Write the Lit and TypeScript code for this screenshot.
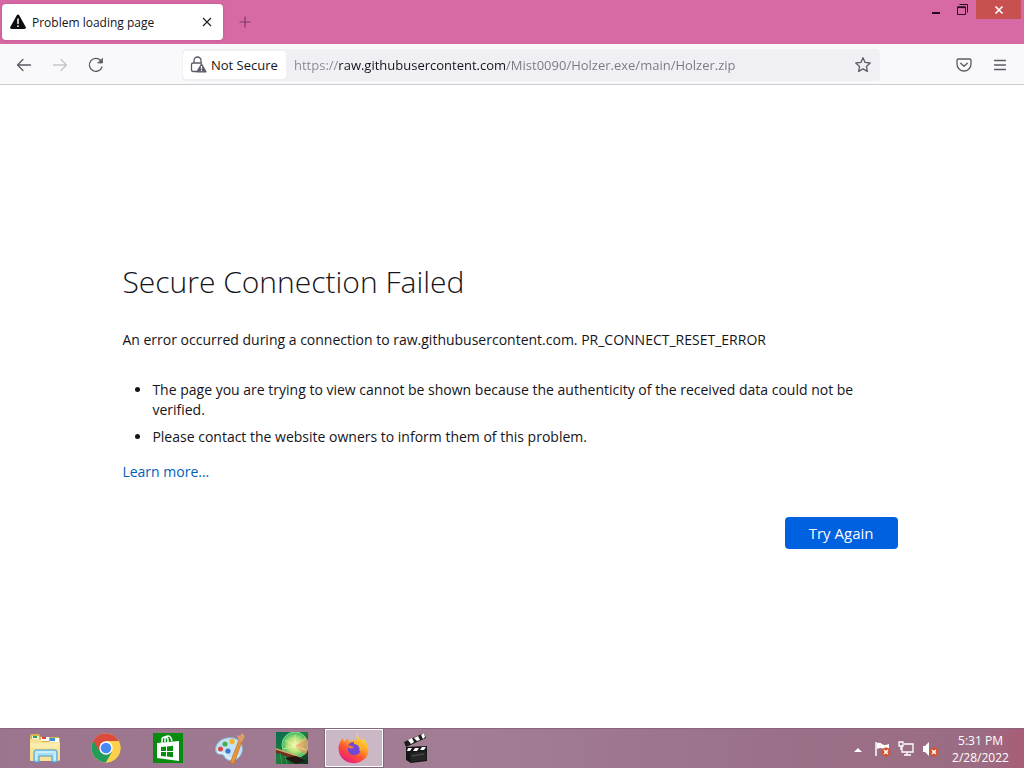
import { LitElement, html, svg, css } from "lit";
import { customElement, state } from "lit/decorators.js";

const warning = svg`<path d="M6.8 1.3a1.4 1.4 0 0 1 2.4 0l6.5 11.6a1.4 1.4 0 0 1-1.2 2.1h-13a1.4 1.4 0 0 1-1.2-2.1z" fill="#0c0c0d"/><path d="M8 5v4.6" stroke="#fff" stroke-width="1.5" stroke-linecap="round"/><circle cx="8" cy="12.2" r=".9" fill="#fff"/>`;

@customElement("browser-tabs")
class BrowserTabs extends LitElement {
  static styles = css`
    :host { display: flex; align-items: flex-start; height: 44px; background: #d769a4; font: 12px/16px "Open Sans", sans-serif; }
    button { border: 0; padding: 0; background: none; display: grid; place-items: center; }
    .tab { display: flex; align-items: center; gap: 6px; box-sizing: border-box; width: 221px; height: 36px; margin: 4px 0 0 2px; padding: 0 6px 0 8px; background: #fff; border-radius: 4px; box-shadow: 0 0 3px #80408066; color: #15141a; }
    .title { flex: 1; padding-top: 2px; }
    .close { width: 20px; height: 20px; }
    .new { width: 32px; height: 36px; margin: 4px 0 0 6px; }
    .controls { display: flex; margin-left: auto; margin-right: 3px; }
    .control { width: 26px; height: 19px; }
    .exit { width: 45px; height: 19px; background: #c75050; margin-left: 1px; }
  `;
  render() {
    return html`
      <div class="tab">
        <svg width="16" height="16" viewBox="0 0 16 16" aria-hidden="true">${warning}</svg>
        <span class="title">Problem loading page</span>
        <button class="close" aria-label="Close tab"><svg width="10" height="10" viewBox="0 0 10 10"><path d="M1 1l8 8M9 1L1 9" stroke="#222" stroke-width="1.2"/></svg></button>
      </div>
      <button class="new" aria-label="New tab"><svg width="12" height="12" viewBox="0 0 12 12"><path d="M6 .5v11M.5 6h11" stroke="#7b3c68" stroke-width="1.2"/></svg></button>
      <div class="controls">
        <button class="control" aria-label="Minimize"><svg width="10" height="12" viewBox="0 0 10 12"><path d="M1 9h8" stroke="#260d20" stroke-width="2"/></svg></button>
        <button class="control" aria-label="Restore"><svg width="11" height="11" viewBox="0 0 11 11" fill="none" stroke="#260d20"><path d="M2.5 .5h8v8"/><path d="M.5 3h8v7.5h-8z"/><path d="M.5 3.3h8" stroke-width="1.6"/></svg></button>
        <button class="exit" aria-label="Close window"><svg width="10" height="10" viewBox="0 0 10 10"><path d="M1.5 1.5l7 7M8.5 1.5l-7 7" stroke="#fff" stroke-width="1.7"/></svg></button>
      </div>`;
  }
}

@customElement("browser-toolbar")
class BrowserToolbar extends LitElement {
  static styles = css`
    :host { display: flex; align-items: center; box-sizing: border-box; height: 41px; padding: 1px 6px 0; background: #f9f9fb; border-bottom: 1px solid #cccccf; font: 13px/20px "Open Sans", sans-serif; color: #15141a; }
    button { border: 0; padding: 0; background: none; display: grid; place-items: center; flex: none; width: 36px; height: 32px; color: #5b5b66; font: inherit; }
    .dim { color: #c4c4ca; }
    svg { fill: none; stroke: currentColor; stroke-width: 1.3; stroke-linecap: round; stroke-linejoin: round; }
    .bar { flex: 1; display: flex; align-items: center; height: 32px; margin: 0 66px 0 68px; background: #f0f0f4; border-radius: 4px; }
    .identity { display: flex; align-items: center; gap: 4px; width: 103px; height: 28px; margin-left: 1px; padding-left: 7px; box-sizing: border-box; border-radius: 4px; background: #fff; color: #15141a; white-space: nowrap; }
    .identity svg { color: #5b5b66; flex: none; }
    .url { flex: 1; min-width: 0; height: 28px; border: 0; outline: 0; margin-left: 8px; padding: 0; font: inherit; color: transparent; background: linear-gradient(90deg, #87878f 45px, #15141a 45px 211px, #77777f 211px); -webkit-background-clip: text; background-clip: text; }
    .star { width: 34px; }
  `;
  render() {
    return html`
      <button aria-label="Back"><svg width="16" height="16" viewBox="0 0 16 16"><path d="M14.5 8H1.5M7 2.5L1.5 8 7 13.5"/></svg></button>
      <button class="dim" aria-label="Forward"><svg width="16" height="16" viewBox="0 0 16 16"><path d="M1.5 8h13M9 2.5L14.5 8 9 13.5"/></svg></button>
      <button aria-label="Reload"><svg width="16" height="16" viewBox="0 0 16 16"><path d="M14 10A6.5 6.5 0 1 1 12.7 3.5L14 5"/><path d="M14.5 1.5v4.5H10z" fill="currentColor" stroke-width=".8"/></svg></button>
      <div class="bar">
        <button class="identity"><svg width="17" height="17" viewBox="0 0 17 17"><path d="M4 7V4.500a3.500 3.500 0 0 1 7 0V7M7 15.500H3A1.500 1.500 0 0 1 1.500 14V8.500A1.500 1.500 0 0 1 3 7h8.500"/><path d="M11.500 8l4.500 7.800H7z" fill="currentColor"/><path d="M11.500 10.500v2.200M11.500 14.300v.1" stroke="#fff"/></svg>Not Secure</button>
        <input class="url" aria-label="Address" spellcheck="false" .value=${"https://raw.githubusercontent.com/Mist0090/Holzer.exe/main/Holzer.zip"}>
        <button class="star" aria-label="Bookmark this page"><svg width="16" height="16" viewBox="0 0 16 16"><path d="M8 .8l2.100 4.600 5.100.6-3.800 3.400 1 5L8 11.900l-4.400 2.500 1-5L.8 6l5.100-.6z"/></svg></button>
      </div>
      <button aria-label="Save to Pocket"><svg width="16" height="16" viewBox="0 0 16 16"><path d="M2.500 2h11A1.500 1.500 0 0 1 15 3.500V7A7 7 0 0 1 1 7V3.500A1.500 1.500 0 0 1 2.500 2zM4.700 6.200L8 9.300l3.300-3.100"/></svg></button>
      <button aria-label="Menu"><svg width="14" height="14" viewBox="0 0 14 14"><path d="M1.500 2.500h11M1.500 7h11M1.500 11.500h11"/></svg></button>`;
  }
}

@customElement("error-page")
class ErrorPage extends LitElement {
  @state() private attempts = 0;
  static styles = css`
    :host { display: flex; flex-direction: column; align-items: center; justify-content: center; flex: 1; box-sizing: border-box; padding: 0 4px 2px 0; background: #fff; color: #15141a; font: 14px/20px "Open Sans", sans-serif; }
    main { width: 76%; max-width: 776px; }
    h1 { margin: 0 0 28px; font-size: 30px; line-height: 40px; font-weight: 300; }
    p { margin: 0; }
    ul { margin: 30px 0 0; padding: 0 0 0 30px; }
    li { margin-bottom: 7px; }
    .more { display: inline-block; margin-top: 8px; color: #0061b8; text-decoration: none; }
    .actions { display: flex; justify-content: flex-end; margin-top: 35px; }
    .retry { width: 113px; height: 32px; border: 0; border-radius: 4px; background: #0061e0; color: #fbfbfe; font: inherit; font-size: 15px; }
  `;
  render() {
    return html`<main>
      <h1>Secure Connection Failed</h1>
      <p>An error occurred during a connection to raw.githubusercontent.com. PR_CONNECT_RESET_ERROR</p>
      <ul>
        <li>The page you are trying to view cannot be shown because the authenticity of the received data could not be verified.</li>
        <li>Please contact the website owners to inform them of this problem.</li>
      </ul>
      <a class="more" href="#">Learn more…</a>
      <div class="actions"><button class="retry" @click=${() => this.attempts++}>Try Again</button></div>
    </main>`;
  }
}

const folder = svg`<path d="M2 4q0-2 2-2h7l2 3h17q2 0 2 2v20q0 2-2 2H4q-2 0-2-2z" fill="#d9b44e"/><path d="M4 4h7v4H4z" fill="#f5f1de"/><path d="M5 4h4v2H5z" fill="#31a354"/><path d="M13 5h8v4h-8z" fill="#fff"/><path d="M14 5h4v2h-4z" fill="#db4437"/><path d="M22 6h9v4h-9z" fill="#fff"/><path d="M22 6h5v3h-5z" fill="#3b8ed0"/><path d="M2 7h10l2 3h18v17q0 2-2 2H3q-1 0-1-2z" fill="#f7e393"/><path d="M3 11h28v5H3z" fill="#fbedb0"/><path d="M6 30V20q0-2 2-2h19q2 0 2 2v10h-5v-6H11v6z" fill="#a9e0f6" stroke="#479bc8"/><path d="M8 20h19M8 21v7M27 21v7" stroke="#e8fbff"/>`;
const chrome = svg`<circle cx="16" cy="16" r="14.5" fill="#fcd04b"/><path d="M3.4 8.8A14.5 14.5 0 0 0 16 30.5l6.3-11-6.3-3.5z" fill="#259b5a"/><path d="M28.6 8.8H16v7.200l6.300 3.500L16 30.500A14.500 14.500 0 0 0 28.600 8.800z" fill="#fcd04b"/><path d="M3.400 8.800L9.800 19.500 16 9h12.600A14.500 14.500 0 0 0 3.400 8.800z" fill="#db4a3b"/><circle cx="16" cy="16" r="6.700" fill="#fff"/><circle cx="16" cy="16" r="5.300" fill="#4688f4"/>`;
const store = svg`<path d="M1 1h30v30H1z" fill="#078c10"/><path d="M5 11l22-2v20L5 26z" fill="#fff"/><path d="M10 11V8q0-3 3-3t3 3v3M13 10V7q0-3 3-3t4 5" fill="none" stroke="#fff" stroke-width="1.500"/><path d="M9 15l5-.5V19H9zM15 14.400l6-.6V19h-6zM9 20h5v4.500L9 24zM15 20h6v5.200l-6-.6z" fill="#078c10"/>`;
const paint = svg`<path d="M13 6C5 7 0 14 2 20c2 4 6 1 8 4 2 5 8 6 13 3 6-4 7-12 3-17-3-4-8-5-13-4z" fill="#c4e3f5" stroke="#84b5d8"/><path d="M4 20c3 2 6 0 8 3 2 5 9 4 13 0" fill="none" stroke="#fff"/><circle cx="11" cy="12" r="2.600" fill="#4aae50"/><circle cx="18" cy="9.500" r="2.700" fill="#f1b52e"/><circle cx="6.500" cy="17" r="2.500" fill="#d94747"/><circle cx="14" cy="19" r="2.600" fill="#3c78cf"/><path d="M25 8l3 1-8 23-4-1z" fill="#e89439" stroke="#b96627" stroke-width=".6"/><path d="M25 9l-2-6 3 1 2-3 3 3-3 6z" fill="#dc9e65"/>`;
const artwork = svg`<defs><linearGradient id="leaf" x2="1" y2="1"><stop stop-color="#096b55"/><stop offset=".5" stop-color="#237d3b"/><stop offset="1" stop-color="#093022"/></linearGradient><radialGradient id="fruit"><stop stop-color="#fff6b0"/><stop offset=".55" stop-color="#b5e37a"/><stop offset="1" stop-color="#38b75e"/></radialGradient></defs><path d="M0 0h32v32H0z" fill="url(#leaf)"/><circle cx="19" cy="13" r="13" fill="url(#fruit)" stroke="#7ddd8c"/><path d="M19 14L29 5a13 13 0 0 1 0 18z" fill="#ed9961" opacity=".7"/><path d="M19 14L9 8M19 14V3M19 14L7 17M19 14l10-7M19 14l11 4" stroke="#f5f6bb" opacity=".6"/><path d="M0 17l26 9-1 3L0 21z" fill="#6b321c"/><path d="M0 17l22 7" stroke="#d7a96a" stroke-width="1.500"/><path d="M8 26l12-2 10 5-10 3z" fill="#201711"/><path d="M4 21l2 11M9 24l2 8" stroke="#2b9a56"/>`;
const firefox = svg`<defs><linearGradient id="flame" x1=".8" y1="0" x2=".2" y2="1"><stop stop-color="#fff152"/><stop offset=".35" stop-color="#ffad25"/><stop offset=".65" stop-color="#ff4e35"/><stop offset="1" stop-color="#df168c"/></linearGradient></defs><path d="M20 0c-1 4 1 6 3 8l3-1c6 8 6 17-1 21-8 6-19 3-23-5C-1 16 1 10 5 6l1 4 4-4 1 4c3-2 6-2 9-2-2-2-2-5 0-8z" fill="url(#flame)"/><path d="M10 13q5-6 11 0c4 5 0 11-6 10-4-1-6-4-5-8 2 3 5 1 6 0-2-1-4-1-6-2z" fill="#7147d8"/><path d="M16 12c4 0 7 4 5 7l3-1c0-5-3-9-8-9z" fill="#ffb229"/>`;
const clapper = svg`<path d="M6 15l21-1v15l-16 2-5-3z" fill="#151515"/><path d="M4 10L24 1l2 5L6 15z" fill="#1d1d1d"/><path d="M8 8l4-2 2 4-3 2zM14 6l4-2 2 4-3 1zM21 3l3-2 1 4-2 2zM8 16h4l-2 3H7zM15 16h4l-2 3h-4zM22 15h4l-2 3h-4z" fill="#fff"/><path d="M10 21l16-2v9l-15 2z" fill="#252525"/><path d="M12 24l12-2" stroke="#555"/>`;
const alertBadge = svg`<circle cx="12" cy="11" r="4.600" fill="#d3512f"/><path d="M10 9l4 4M14 9l-4 4" stroke="#fff" stroke-width="1.500"/>`;

@customElement("task-bar")
class TaskBar extends LitElement {
  static styles = css`
    :host { display: flex; box-sizing: border-box; height: 40px; padding: 0 16px 0 14px; background: linear-gradient(90deg, #9b748d 0, #a27e94 45%, #9a7189 75%, #9b6c83 96%, #a95c75 100%); box-shadow: inset 0 1px #8a647c; font: 12px/17px "Open Sans", sans-serif; color: #fff; }
    button { display: grid; place-items: center; box-sizing: border-box; border: 1px solid transparent; padding: 0; background: none; color: inherit; }
    .apps { display: flex; gap: 2px; }
    .app { width: 60px; height: 40px; }
    .active { border-color: #fff; background: #cbb8c6; outline: 1px solid #80677b; outline-offset: -1px; border-width: 2px; }
    .tray { display: flex; align-items: center; margin-left: auto; padding-top: 2px; }
    .item { width: 24px; height: 24px; }
    .clock { font: inherit; height: 38px; width: 55px; margin-left: 11px; white-space: nowrap; display: flex; flex-direction: column; align-items: center; justify-content: center; }
  `;
  private apps = [
    { name: "File Explorer", icon: folder }, { name: "Chrome", icon: chrome },
    { name: "Store", icon: store }, { name: "Paint", icon: paint },
    { name: "Paint Tool", icon: artwork }, { name: "Firefox", icon: firefox },
    { name: "Movie Editor", icon: clapper },
  ];
  render() {
    return html`
      <div class="apps">${this.apps.map((a) => html`<button class="app ${a.name === "Firefox" ? "active" : ""}" aria-label=${a.name}><svg width="32" height="32" viewBox="0 0 32 32">${a.icon}</svg></button>`)}</div>
      <div class="tray">
        <button class="item" aria-label="Show hidden icons"><svg width="8" height="5" viewBox="0 0 8 5"><path d="M0 5l4-4 4 4z" fill="#fff"/></svg></button>
        <button class="item" aria-label="Action Center"><svg width="17" height="16" viewBox="0 0 17 16"><path d="M2 1v14" stroke="#fff" stroke-width="1.500"/><path d="M3 2q3-1 5 1t7 0v6q-4 1-6-1T3 8z" fill="#fff"/>${alertBadge}</svg></button>
        <button class="item" aria-label="Network"><svg width="16" height="16" viewBox="0 0 16 16" fill="none" stroke="#fff" stroke-width="1.300"><path d="M6 3h9v8H4V6M9 11v3M6 14h7"/><path d="M1 1h4v4H1zM3 5v4"/></svg></button>
        <button class="item" aria-label="Volume"><svg width="17" height="16" viewBox="0 0 17 16"><path d="M1 5h2l4-4v14l-4-4H1z" fill="#fff"/>${alertBadge}</svg></button>
        <button class="clock"><span>5:31 PM</span><span>2/28/2022</span></button>
      </div>`;
  }
}

@customElement("app-root")
class AppRoot extends LitElement {
  static styles = css`:host { display: flex; flex-direction: column; min-height: 100vh; }`;
  render() {
    return html`<browser-tabs></browser-tabs><browser-toolbar></browser-toolbar><error-page></error-page><task-bar></task-bar>`;
  }
}
